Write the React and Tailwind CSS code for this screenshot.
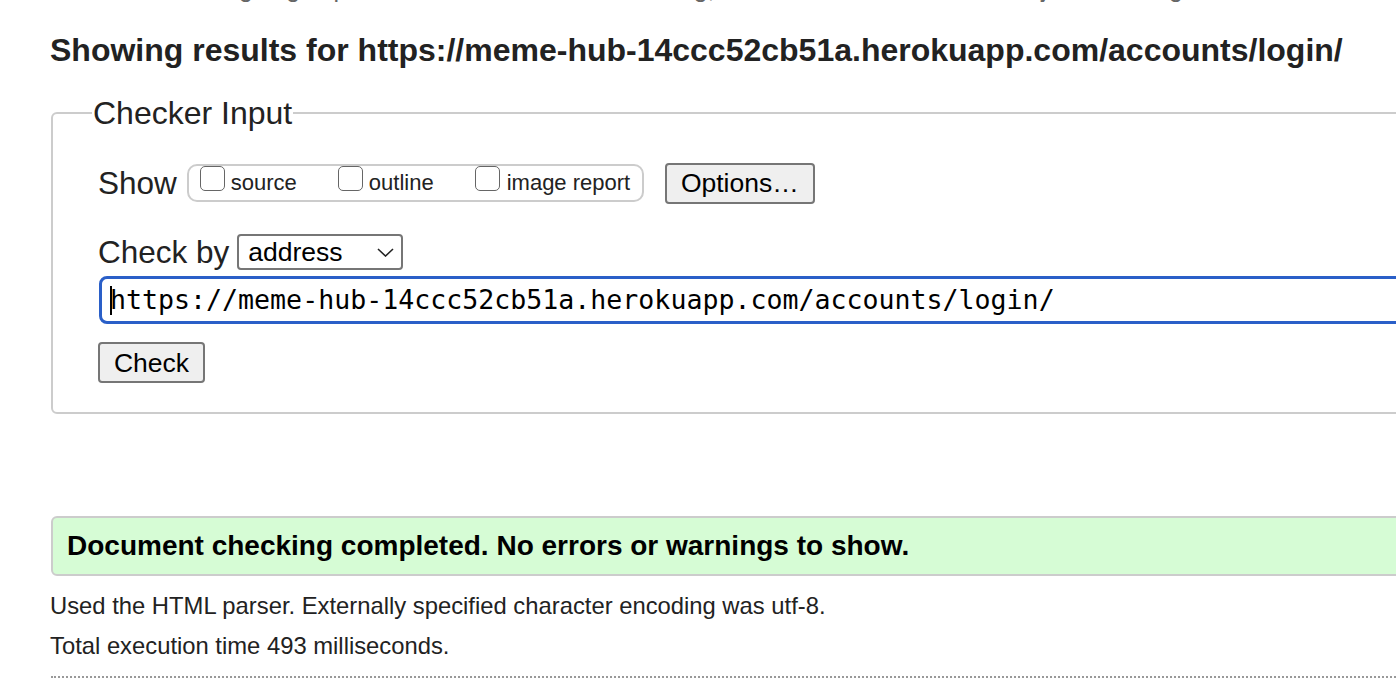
export default function App() {
  const sans = { fontFamily: '"Liberation Sans", Arial, sans-serif' };
  return (
    <div className="w-[1396px] h-[690px] overflow-hidden bg-white text-[#222]" style={sans}>
      <div className="w-[1500px] pl-[50px]">
        <div className="h-[8px] overflow-hidden">
          <p className="text-[25px] leading-[25px] mt-[-24px] text-[#666] whitespace-nowrap">
            This tool is an ongoing experiment in better HTML checking, and its behavior remains subject to change
          </p>
        </div>
        <h2 className="mt-[24px] text-[32px] leading-[36px] font-bold whitespace-nowrap">
          Showing results for https://meme-hub-14ccc52cb51a.herokuapp.com/accounts/login/
        </h2>
        <fieldset className="mt-[27px] ml-[1px] border-2 border-[#ccc] rounded-[6px] pl-[45px] pt-0 pb-[29px] min-w-0">
          <legend className="text-[32px] leading-[36px] px-[1px] ml-[-6px]">Checker Input</legend>
          <div className="flex items-center h-[42px] mt-[31px]">
            <span className="text-[31.5px] leading-[36px] mr-[10px]">Show</span>
            <div className="flex items-center h-[38px] border-2 border-[#ccc] rounded-[10px] pl-[11px] w-[457px]">
              <label className="flex items-center">
                <span className="w-[25px] h-[25px] border-[1.5px] border-[#666] rounded-[5px] mt-[-9px]"></span>
                <span className="text-[22px] leading-[26px] ml-[6px]">source</span>
              </label>
              <label className="flex items-center ml-[41px]">
                <span className="w-[25px] h-[25px] border-[1.5px] border-[#666] rounded-[5px] mt-[-9px]"></span>
                <span className="text-[22px] leading-[26px] ml-[6px]">outline</span>
              </label>
              <label className="flex items-center ml-[41px]">
                <span className="w-[25px] h-[25px] border-[1.5px] border-[#666] rounded-[5px] mt-[-9px]"></span>
                <span className="text-[22px] leading-[26px] ml-[7px]">image report</span>
              </label>
            </div>
            <button className="ml-[21px] h-[41px] w-[150px] bg-[#efefef] border-2 border-[#767676] rounded-[4px] text-[26.5px] leading-[30px] text-black">
              Options…
            </button>
          </div>
          <div className="flex items-center h-[36px] mt-[30px]">
            <span className="text-[31.5px] leading-[36px] mr-[8px]">Check by</span>
            <div className="flex items-center justify-between w-[166px] h-[36px] border-2 border-[#767676] rounded-[4px] pl-[9px] pr-[7px]">
              <span className="text-[26.5px] leading-[30px] text-black">address</span>
              <svg width="17" height="9" viewBox="0 0 17 9" fill="none" stroke="#222" strokeWidth="1.6">
                <path d="M1 1 L8.5 8 L16 1" />
              </svg>
            </div>
          </div>
          <div className="mt-[6px] ml-[1px] h-[48px] border-[3px] border-[#2a5fc8] rounded-[8px] flex items-center pl-[8px] mr-[-60px]">
            <span className="w-[2px] h-[29px] bg-black"></span>
            <span className="ml-[-2px] text-[26.6px] text-black whitespace-nowrap" style={{ fontFamily: '"DejaVu Sans Mono", monospace' }}>
              https://meme-hub-14ccc52cb51a.herokuapp.com/accounts/login/
            </span>
          </div>
          <button className="block mt-[18px] h-[41px] w-[107px] bg-[#efefef] border-2 border-[#767676] rounded-[4px] text-[26.5px] leading-[30px] text-black">
            Check
          </button>
        </fieldset>
        <div className="mt-[102px] ml-[1px] h-[60px] bg-[#d6fcd5] border-2 border-[#ccc] rounded-[6px] flex items-center pl-[14px]">
          <span className="text-[28px] leading-[32px] font-bold text-black whitespace-nowrap">
            Document checking completed. No errors or warnings to show.
          </span>
        </div>
        <p className="mt-[16px] text-[23.8px] leading-[28px] whitespace-nowrap">
          Used the HTML parser. Externally specified character encoding was utf-8.
        </p>
        <p className="mt-[12px] text-[23.8px] leading-[28px] whitespace-nowrap">
          Total execution time 493 milliseconds.
        </p>
        <div className="mt-[16px] ml-[1px] border-t-2 border-dotted border-[#999]"></div>
      </div>
    </div>
  );
}
